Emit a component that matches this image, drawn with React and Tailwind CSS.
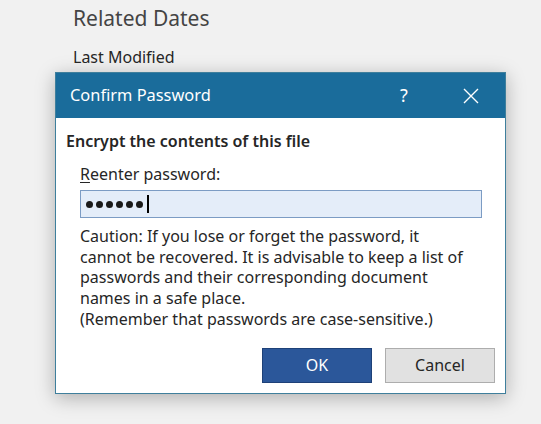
// Confirm Password dialog over a backstage "Related Dates" panel
import React from 'react';

const font = { fontFamily: '"Segoe UI", "Noto Sans", "Open Sans", sans-serif' };

function Dots({ count }) {
  return (
    <span className="flex items-center gap-[3px]">
      {Array.from({ length: count }).map((_, i) => (
        <span key={i} className="block h-[7px] w-[7px] rounded-full bg-[#1a1a1a]" />
      ))}
      <span className="ml-[1px] block h-[18px] w-[1.5px] bg-black" />
    </span>
  );
}

export default function App() {
  return (
    <div className="h-[424px] w-[541px] overflow-hidden bg-[#f1f1f1] text-[#262626]" style={font}>
      <div className="pl-[73px] pt-[4px]">
        <div className="text-[21px] leading-[28px] text-[#444]">Related Dates</div>
        <div className="mt-[15px] text-[16px] leading-[20px] text-[#262626]">Last Modified</div>
      </div>

      {/* dialog */}
      <div className="ml-[55px] mt-[5px] w-[451px] border border-[#3f7f9c] bg-white shadow-[0_4px_18px_rgba(0,0,0,0.28)]">
        <div className="flex h-[45px] items-center bg-[#1a6c9b] pl-[14px] text-white">
          <span className="flex-1 text-[16.4px]">Confirm Password</span>
          <span className="w-[24px] text-center text-[18px]">?</span>
          <span className="ml-[43px] mr-[22px] flex w-[24px] justify-center">
            <svg width="16" height="16" viewBox="0 0 16 16" fill="none" stroke="white" strokeWidth="1.4">
              <path d="M1 1 L15 15 M15 1 L1 15" />
            </svg>
          </span>
        </div>

        <div className="px-[10px] pb-[10px] pt-[13px]">
          <div className="text-[16px] font-semibold leading-[20px] text-[#262626]">
            Encrypt the contents of this file
          </div>
          <div className="pl-[14px]">
            <div className="mt-[13px] text-[16px] leading-[20px]">
              <span className="underline underline-offset-2">R</span>eenter password:
            </div>
            <div className="mt-[6px] flex h-[28px] w-[402px] items-center border border-[#7c9cc4] bg-[#e4edf9] pl-[5px]">
              <Dots count={6} />
            </div>
            <div className="mt-[8px] text-[16px] leading-[20.7px]">
              Caution: If you lose or forget the password, it
              <br />
              cannot be recovered. It is advisable to keep a list of
              <br />
              passwords and their corresponding document
              <br />
              names in a safe place.
              <br />
              (Remember that passwords are case-sensitive.)
            </div>
          </div>
          <div className="mt-[18px] flex justify-end gap-[13px]">
            <button className="h-[35px] w-[110px] border border-[#1e4178] bg-[#2b579a] text-[16px] text-white">
              OK
            </button>
            <button className="h-[35px] w-[110px] border border-[#adadad] bg-[#e1e1e1] text-[16px] text-[#262626]">
              Cancel
            </button>
          </div>
        </div>
      </div>
    </div>
  );
}
